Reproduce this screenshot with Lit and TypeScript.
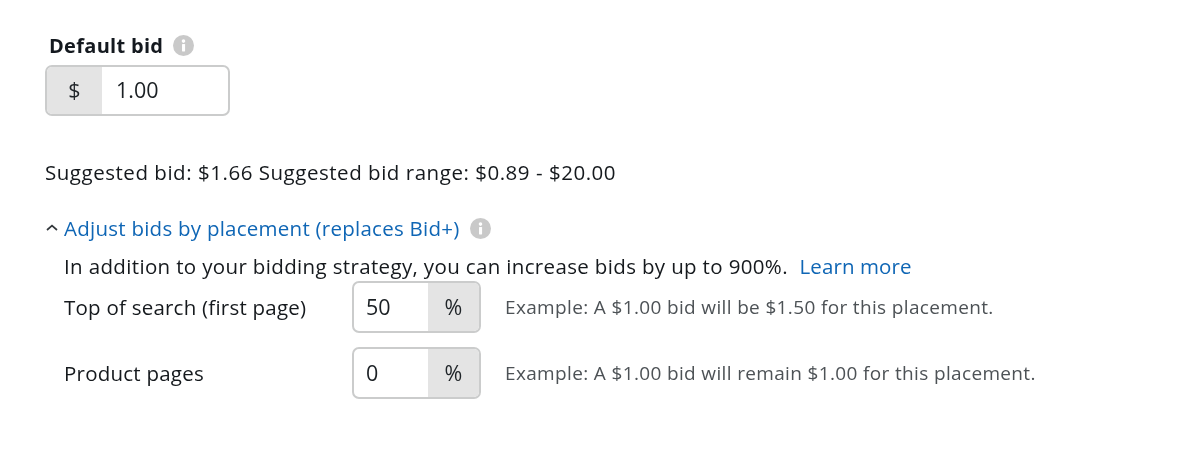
import { LitElement, html, css, svg } from "lit";
import { customElement } from "lit/decorators.js";

const info = svg`<svg class="info" viewBox="0 0 20 20" width="21" height="21" aria-hidden="true"><circle cx="10" cy="10" r="10" fill="#c9c9c9"/><rect x="8.6" y="8.6" width="2.9" height="7" rx=".5" fill="#fff"/><circle cx="10" cy="5.8" r="1.7" fill="#fff"/></svg>`;

@customElement("app-root")
export class AppRoot extends LitElement {
  static styles = css`
    :host { display: block; width: 1199px; height: 455px; background: #fff; color: #15191d; font-family: "Open Sans", "Noto Sans", sans-serif; font-size: 20.5px; overflow: hidden; }
    .page { display: flex; flex-direction: column; padding: 33px 0 0 45px; box-sizing: border-box; filter: blur(0.45px); }
    .title { display: flex; align-items: center; gap: 10px; margin-left: 4px; height: 24px; font-weight: 700; font-size: 20px; letter-spacing: 0.3px; color: #14191f; }
    .field { display: flex; box-sizing: border-box; border: 2px solid #cbcccc; border-radius: 7px; overflow: hidden; background: #fff; height: 51px; align-items: stretch; font-size: 21.5px; }
    .bid { width: 185px; margin-top: 8px; }
    .addon { display: flex; align-items: center; justify-content: center; background: #e4e4e4; color: #1f2428; padding-bottom: 2px; }
    .val { display: flex; align-items: center; color: #1b2024; padding-bottom: 2px; }
    .bid .addon { width: 55px; }
    .bid .val { padding-left: 14px; }
    .suggest { margin-top: 42px; height: 28px; line-height: 28px; letter-spacing: 0.53px; white-space: nowrap; }
    .adjust { display: flex; align-items: center; margin-top: 28px; height: 28px; white-space: nowrap; }
    .chev { width: 19px; flex: none; display: flex; }
    .adjust .link { letter-spacing: 0.25px; margin-right: 11px; }
    .link { color: #0f66b5; }
    .body { margin-left: 19px; display: flex; flex-direction: column; }
    .intro { height: 28px; line-height: 28px; margin-top: 10px; letter-spacing: 0.35px; white-space: nowrap; }
    .intro .link { margin-left: 6px; letter-spacing: 0.1px; }
    .rows { display: flex; flex-direction: column; gap: 14px; margin-top: 1px; }
    .row { display: grid; grid-template-columns: 264px 129px 1fr; column-gap: 24px; align-items: center; }
    .label { letter-spacing: 0.23px; white-space: nowrap; }
    .pct { width: 129px; height: 52px; }
    .pct .val { width: 74px; padding-left: 12px; box-sizing: border-box; }
    .pct .addon { flex: 1; }
    .hint { font-size: 19px; letter-spacing: 0.35px; color: #4d5256; white-space: nowrap; }
  `;

  row(label: string, value: string, hint: string) {
    return html`<div class="row">
      <div class="label">${label}</div>
      <div class="field pct"><div class="val">${value}</div><div class="addon">%</div></div>
      <div class="hint">${hint}</div>
    </div>`;
  }

  render() {
    return html`<div class="page">
      <div class="title">Default bid ${info}</div>
      <div class="field bid"><div class="addon">$</div><div class="val">1.00</div></div>
      <div class="suggest">Suggested bid: $1.66 Suggested bid range: $0.89 - $20.00</div>
      <div class="adjust">
        <span class="chev"><svg viewBox="0 0 14 10" width="14" height="10" aria-hidden="true"><path d="M2 7 L7 2.6 L12 7" fill="none" stroke="#33383c" stroke-width="1.7"/></svg></span>
        <span class="link">Adjust bids by placement (replaces Bid+)</span>${info}
      </div>
      <div class="body">
        <div class="intro">In addition to your bidding strategy, you can increase bids by up to 900%. <span class="link">Learn more</span></div>
        <div class="rows">
          ${this.row("Top of search (first page)", "50", "Example: A $1.00 bid will be $1.50 for this placement.")}
          ${this.row("Product pages", "0", "Example: A $1.00 bid will remain $1.00 for this placement.")}
        </div>
      </div>
    </div>`;
  }
}
